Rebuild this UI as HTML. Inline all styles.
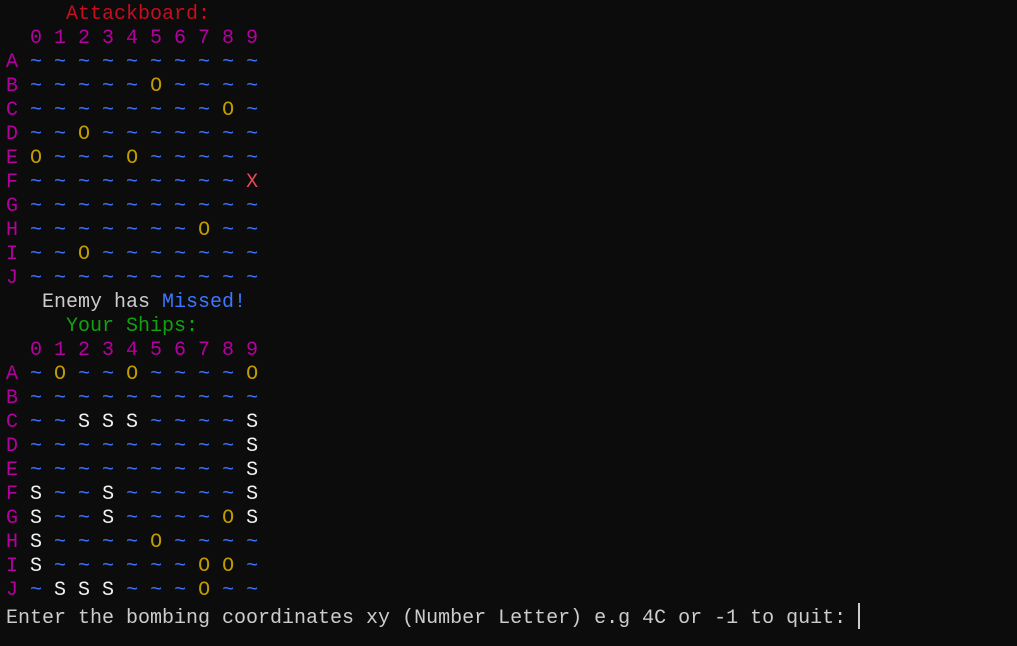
<!DOCTYPE html>
<html><head><meta charset="utf-8"><style>
html,body{margin:0;background:#0c0c0c;width:1017px;height:646px;overflow:hidden}
pre{margin:0;position:absolute;left:6px;top:3px;font-family:"Liberation Mono",monospace;font-size:20px;line-height:24px;color:#cccccc}
.r{color:#c50f1f}.m{color:#b4009e}.b{color:#3b78ff}.y{color:#c19c00}.g{color:#13a10e}.x{color:#e74856}.w{color:#f2f2f2}
.cur{display:inline-block;width:2px;height:26px;background:#ccc;vertical-align:-6px}
</style></head><body><pre>
<span class="r">     Attackboard:</span>
<span class="m">  0 1 2 3 4 5 6 7 8 9</span>
<span class="m">A</span> <span class="b">~ ~ ~ ~ ~ ~ ~ ~ ~ ~</span>
<span class="m">B</span> <span class="b">~ ~ ~ ~ ~ </span><span class="y">O</span><span class="b"> ~ ~ ~ ~</span>
<span class="m">C</span> <span class="b">~ ~ ~ ~ ~ ~ ~ ~ </span><span class="y">O</span><span class="b"> ~</span>
<span class="m">D</span> <span class="b">~ ~ </span><span class="y">O</span><span class="b"> ~ ~ ~ ~ ~ ~ ~</span>
<span class="m">E</span> <span class="y">O</span><span class="b"> ~ ~ ~ </span><span class="y">O</span><span class="b"> ~ ~ ~ ~ ~</span>
<span class="m">F</span> <span class="b">~ ~ ~ ~ ~ ~ ~ ~ ~ </span><span class="x">X</span>
<span class="m">G</span> <span class="b">~ ~ ~ ~ ~ ~ ~ ~ ~ ~</span>
<span class="m">H</span> <span class="b">~ ~ ~ ~ ~ ~ ~ </span><span class="y">O</span><span class="b"> ~ ~</span>
<span class="m">I</span> <span class="b">~ ~ </span><span class="y">O</span><span class="b"> ~ ~ ~ ~ ~ ~ ~</span>
<span class="m">J</span> <span class="b">~ ~ ~ ~ ~ ~ ~ ~ ~ ~</span>
   Enemy has <span class="b">Missed!</span>
<span class="g">     Your Ships:</span>
<span class="m">  0 1 2 3 4 5 6 7 8 9</span>
<span class="m">A</span> <span class="b">~ </span><span class="y">O</span><span class="b"> ~ ~ </span><span class="y">O</span><span class="b"> ~ ~ ~ ~ </span><span class="y">O</span>
<span class="m">B</span> <span class="b">~ ~ ~ ~ ~ ~ ~ ~ ~ ~</span>
<span class="m">C</span> <span class="b">~ ~ </span><span class="w">S S S</span><span class="b"> ~ ~ ~ ~ </span><span class="w">S</span>
<span class="m">D</span> <span class="b">~ ~ ~ ~ ~ ~ ~ ~ ~ </span><span class="w">S</span>
<span class="m">E</span> <span class="b">~ ~ ~ ~ ~ ~ ~ ~ ~ </span><span class="w">S</span>
<span class="m">F</span> <span class="w">S</span><span class="b"> ~ ~ </span><span class="w">S</span><span class="b"> ~ ~ ~ ~ ~ </span><span class="w">S</span>
<span class="m">G</span> <span class="w">S</span><span class="b"> ~ ~ </span><span class="w">S</span><span class="b"> ~ ~ ~ ~ </span><span class="y">O</span> <span class="w">S</span>
<span class="m">H</span> <span class="w">S</span><span class="b"> ~ ~ ~ ~ </span><span class="y">O</span><span class="b"> ~ ~ ~ ~</span>
<span class="m">I</span> <span class="w">S</span><span class="b"> ~ ~ ~ ~ ~ ~ </span><span class="y">O O</span><span class="b"> ~</span>
<span class="m">J</span> <span class="b">~ </span><span class="w">S S S</span><span class="b"> ~ ~ ~ </span><span class="y">O</span><span class="b"> ~ ~</span>
Enter the bombing coordinates xy (Number Letter) e.g 4C or -1 to quit: <span class="cur"></span></pre>
</body></html>
